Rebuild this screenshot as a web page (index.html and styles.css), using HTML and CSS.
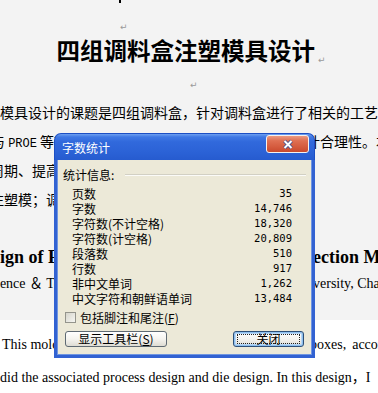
FILE: index.html
```html
<!DOCTYPE html>
<html lang="zh-CN">
<head>
<meta charset="utf-8">
<title>字数统计</title>
<link rel="stylesheet" href="styles.css">
</head>
<body>
<div class="page-top">
  <div class="caret-row"><span class="caret"></span></div>
  <div class="mark-row"><span class="pm">↵</span></div>
  <h1 class="title">四组调料盒注塑模具设计<span class="pm pm-title">↵</span></h1>
  <div class="mark-row2"><span class="pm">↵</span></div>
  <p class="line">模具设计的课题是四组调料盒，针对调料盒进行了相关的工艺</p>
  <p class="line split s2"><span class="l l2">与 <span class="mono">PROE</span> 等软件</span><span class="r">计合理性。本</span></p>
  <p class="line"><span class="l l3">周期、提高</span></p>
  <p class="line"><span class="l l3">注塑模；调</span></p>
  <p class="en-title split s5"><span class="l l5">Design of Four</span><span class="r">Injection Mould</span></p>
  <p class="en-line split s6"><span class="l l6">Science ＆ Technology</span><span class="r">University, Changsha</span></p>
</div>
<div class="page-bottom">
  <p class="en-line2 split s7"><span class="l">This mold</span><span class="r">boxes, according</span></p>
  <p class="en-line2">did the associated process design and die design. In this design，I</p>
</div>

<div class="dialog">
  <div class="titlebar">
    <span class="dlg-title">字数统计</span>
    <span class="close"><svg width="12" height="11" viewBox="0 0 12 11"><path d="M2.5 2 L9.5 9 M9.5 2 L2.5 9" stroke="#3d4f8f" stroke-width="3.6" fill="none"/><path d="M2.5 2 L9.5 9 M9.5 2 L2.5 9" stroke="#ffffff" stroke-width="2" fill="none"/></svg></span>
  </div>
  <div class="dlg-body">
    <div class="group-head"><span>统计信息:</span><span class="sep"></span></div>
    <div class="stats">
      <span>页数</span><span class="num">35</span>
      <span>字数</span><span class="num">14,746</span>
      <span>字符数(不计空格)</span><span class="num">18,320</span>
      <span>字符数(计空格)</span><span class="num">20,809</span>
      <span>段落数</span><span class="num">510</span>
      <span>行数</span><span class="num">917</span>
      <span>非中文单词</span><span class="num">1,262</span>
      <span>中文字符和朝鲜语单词</span><span class="num">13,484</span>
    </div>
    <div class="check"><span class="box"></span><span>包括脚注和尾注(<u>F</u>)</span></div>
    <div class="btns">
      <span class="btn btn-wide">显示工具栏(<u>S</u>)</span>
      <span class="btn btn-default"><span class="focus">关闭</span></span>
    </div>
  </div>
</div>
</body>
</html>
```

FILE: styles.css
```css
* { box-sizing: border-box; margin: 0; padding: 0; }
html, body { width: 378px; height: 393px; overflow: hidden; }
body {
  position: relative;
  background: #ffffff;
  color: #000;
  font-family: "Noto Sans CJK SC", sans-serif;
}

.page-top { background: #f3f3f3; height: 320px; }
.page-bottom { background: #ffffff; padding-top: 8px; }

.caret-row { height: 10px; padding-left: 119px; }
.caret { display: block; width: 2px; height: 3px; background: #000; }

.pm {
  font-family: "DejaVu Sans", sans-serif;
  font-size: 9px;
  font-weight: 400;
  color: #9a9a9a;
}
.mark-row { height: 27px; line-height: 27px; padding-left: 120px; }
.mark-row2 { height: 34px; line-height: 34px; padding-left: 190px; }

.title {
  height: 27px;
  line-height: 27px;
  font-size: 23.5px;
  font-weight: 700;
  text-align: center;
  padding-left: 4px;
  white-space: nowrap;
}
.pm-title { margin-left: 3px; vertical-align: -3px; }

.line {
  height: 29px;
  line-height: 29px;
  font-size: 14px;
  white-space: nowrap;
}
.mono { font-family: "Liberation Mono", monospace; font-size: 12px; }

.split { display: grid; }
.split .l, .split .r { white-space: nowrap; overflow: hidden; }
.s2 { grid-template-columns: 306px 1fr; }
.s5 { grid-template-columns: 290px 1fr; }
.s6 { grid-template-columns: 292px 1fr; }
.s7 { grid-template-columns: 310px 1fr; }

.l2 { text-indent: -9px; }
.l3 { display: block; text-indent: -10px; }
.l5 { text-indent: -28px; }
.l6 { text-indent: -18px; }

.en-title {
  margin-top: 31px;
  height: 25px;
  line-height: 25px;
  font-family: "Liberation Serif", serif;
  font-weight: 700;
  font-size: 18px;
}
.en-line {
  height: 28px;
  line-height: 28px;
  font-family: "Liberation Serif", "Noto Sans CJK SC", serif;
  font-size: 14px;
}
.en-line2 {
  height: 33px;
  line-height: 33px;
  font-family: "Liberation Serif", "Noto Sans CJK SC", serif;
  font-size: 14px;
  white-space: nowrap;
}
.s7 .l { padding-left: 2px; }
.s7 .r { word-spacing: 2.5px; }

/* dialog */
.dialog {
  position: absolute;
  left: 54px;
  top: 133px;
  width: 261px;
  height: 225px;
  display: flex;
  flex-direction: column;
  font-family: "Noto Sans CJK SC", sans-serif;
  font-size: 12px;
  color: #000;
}
.titlebar {
  height: 27px;
  flex: none;
  display: flex;
  align-items: flex-start;
  justify-content: space-between;
  padding: 1px 5px 0 7px;
  border: 1px solid #1c4fc4;
  border-bottom: none;
  border-radius: 7px 7px 0 0;
  background: linear-gradient(#6d9ff0 0, #3f78e4 3px, #3169dc 30%, #2b62d6 70%, #265bcf 100%);
  color: #fff;
}
.dlg-title { line-height: 26px; font-size: 12px; }
.close {
  width: 43px;
  height: 18px;
  display: flex;
  align-items: center;
  justify-content: center;
  border: 1px solid #f4f1f0;
  border-radius: 3px;
  background: linear-gradient(#eb9a80 0, #df6f52 30%, #d45a3d 70%, #c9492e 100%);
}

.dlg-body {
  flex: 1;
  background: #ece9d8;
  border: 3px solid #3262d2;
  border-top: none;
  box-shadow: inset 1px 0 #6f95e0, inset -1px 0 #6f95e0, inset 0 -1px #6f95e0;
  padding: 7px 6px 0 6px;
  display: flex;
  flex-direction: column;
}
.group-head {
  display: flex;
  align-items: center;
  height: 15px;
  line-height: 15px;
}
.sep {
  flex: 1;
  margin-left: 11px;
  border-top: 1px solid #d2d0c4;
  border-bottom: 1px solid #fbfbf8;
}
.stats {
  margin-top: 4px;
  padding: 0 14px 0 9px;
  display: grid;
  grid-template-columns: 1fr auto;
  grid-auto-rows: 15px;
  line-height: 15px;
}
.num {
  font-family: "DejaVu Sans Mono", monospace;
  font-size: 10.5px;
  text-align: right;
}
.check {
  margin-top: 4px;
  height: 15px;
  display: flex;
  align-items: center;
  padding-left: 2px;
  gap: 4px;
  line-height: 15px;
}
.box {
  width: 11px;
  height: 11px;
  border: 1px solid #94948c;
  background: linear-gradient(135deg, #d6d5cc, #f6f6f2);
}
.btns {
  margin-top: 6px;
  padding: 0 2px;
  display: flex;
  justify-content: space-between;
}
.btn {
  height: 16px;
  display: flex;
  align-items: center;
  justify-content: center;
  border: 1px solid #5f6a73;
  border-radius: 3px;
  background: linear-gradient(#ffffff 0, #f5f4ef 50%, #dedcd3 100%);
  line-height: 12px;
}
.btn-wide { width: 102px; }
.btn-default {
  width: 71px;
  border-color: #2d4f78;
  box-shadow: inset 0 0 0 1px #8ec0ee, inset 0 0 0 2px #b9d7f5;
  padding: 2px 3px;
}
.focus {
  flex: 1;
  align-self: stretch;
  display: flex;
  align-items: center;
  justify-content: center;
  border: 1px dotted #222;
}
u { text-decoration: underline; text-underline-offset: 1px; }
```
